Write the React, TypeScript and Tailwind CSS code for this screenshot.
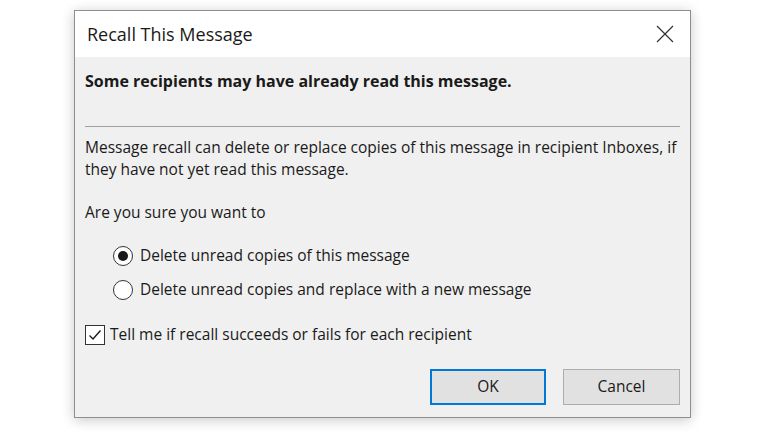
import { useState } from "react";

function Radio({ checked, label, onClick }: { checked: boolean; label: string; onClick: () => void }) {
  return (
    <div className="flex h-[24px] items-center ml-[28px] cursor-default" onClick={onClick}>
      <span className="flex h-[20px] w-[20px] items-center justify-center rounded-full border border-[#333333] bg-white">
        {checked && <span className="h-[10px] w-[10px] rounded-full bg-[#1a1a1a]" />}
      </span>
      <span className="ml-[7px]">{label}</span>
    </div>
  );
}

export default function App() {
  const [choice, setChoice] = useState(0);
  const [notify, setNotify] = useState(true);

  return (
    <div className="min-h-screen bg-white pt-[10px] pl-[74px] text-[#1a1a1a] font-['Open_Sans',sans-serif]">
      <div className="flex h-[408px] w-[617px] flex-col border border-[#8e8e8e] bg-[#f0f0f0] shadow-[0_2px_12px_rgba(0,0,0,0.22)]">
        <div className="flex h-[46px] items-center justify-between bg-white pl-[12px] pr-[16px]">
          <span className="text-[18px]">Recall This Message</span>
          <svg width="18" height="18" viewBox="0 0 18 18" className="text-[#333333]">
            <path d="M1 1L17 17M17 1L1 17" stroke="currentColor" strokeWidth="1.2" fill="none" />
          </svg>
        </div>
        <div className="flex flex-col px-[10px] text-[15.5px]">
          <div className="mt-[14px] h-[20px] whitespace-nowrap text-[16px] leading-[20px] font-bold">
            Some recipients may have already read this message.
          </div>
          <div className="mt-[35px] h-px bg-[#a0a0a0]" />
          <p className="mt-[9px] whitespace-nowrap leading-[22px]">
            Message recall can delete or replace copies of this message in recipient Inboxes, if
            <br />
            they have not yet read this message.
          </p>
          <div className="mt-[21px] h-[22px] leading-[22px]">Are you sure you want to</div>
          <div className="mt-[21px]">
            <Radio checked={choice === 0} label="Delete unread copies of this message" onClick={() => setChoice(0)} />
          </div>
          <div className="mt-[10px]">
            <Radio checked={choice === 1} label="Delete unread copies and replace with a new message" onClick={() => setChoice(1)} />
          </div>
          <div className="mt-[21px] flex h-[24px] items-center" onClick={() => setNotify(!notify)}>
            <span className="flex h-[20px] w-[20px] items-center justify-center border border-[#333333] bg-white">
              {notify && (
                <svg width="14" height="14" viewBox="0 0 14 14">
                  <path d="M1.5 7.5L5 11L12.5 2.5" stroke="#1a1a1a" strokeWidth="1.4" fill="none" />
                </svg>
              )}
            </span>
            <span className="ml-[5px]">Tell me if recall succeeds or fails for each recipient</span>
          </div>
          <div className="mt-[22px] flex justify-end gap-[17px]">
            <button type="button" className="h-[36px] w-[116px] border-2 border-[#0078d7] bg-[#e1e1e1] text-[15.5px]">
              OK
            </button>
            <button type="button" className="h-[36px] w-[117px] border border-[#adadad] bg-[#e1e1e1] text-[15.5px]">
              Cancel
            </button>
          </div>
        </div>
      </div>
    </div>
  );
}
